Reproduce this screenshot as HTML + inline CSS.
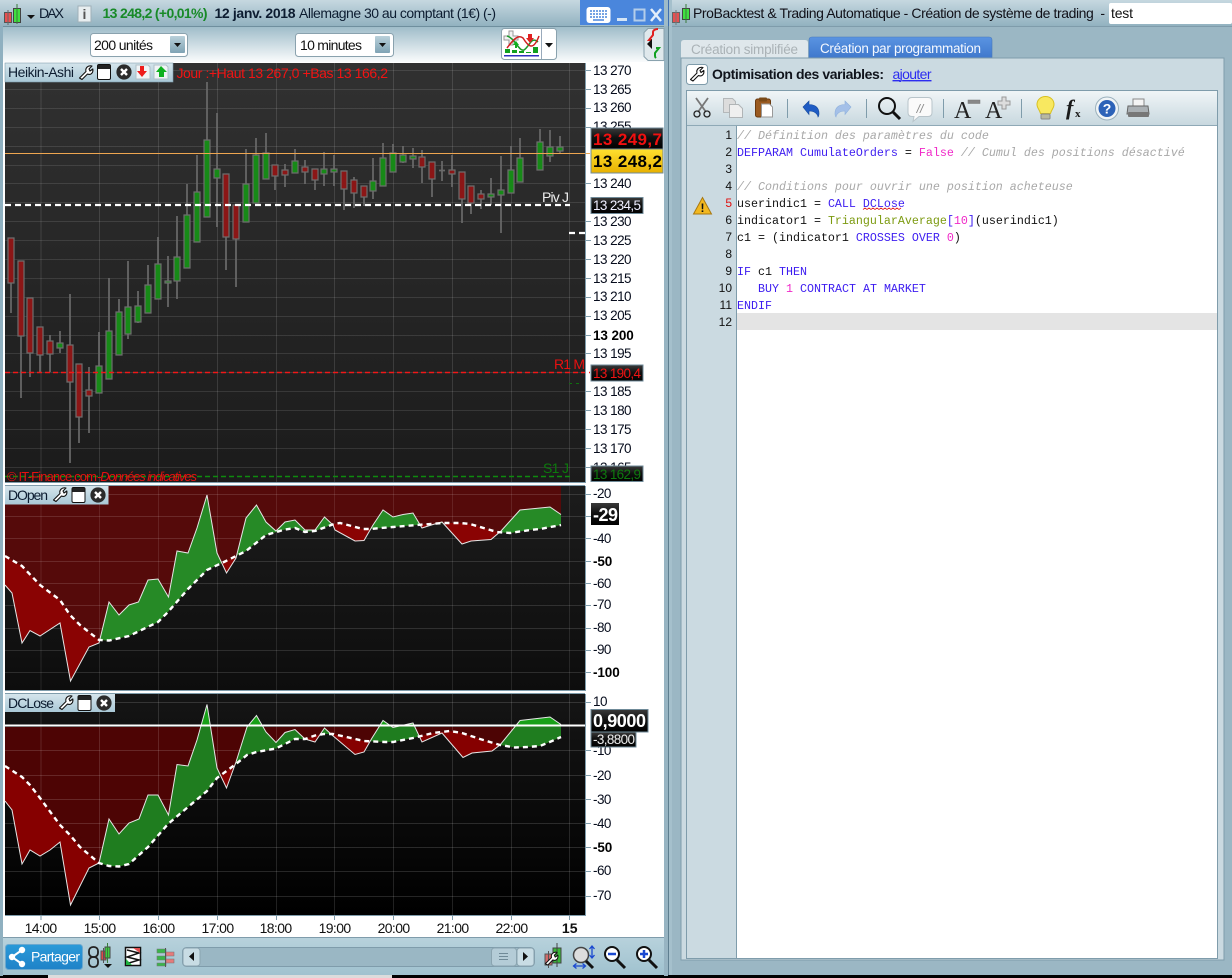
<!DOCTYPE html>
<html><head><meta charset="utf-8"><title>ProBacktest</title>
<style>
html,body{margin:0;padding:0;background:#000;width:1232px;height:978px;overflow:hidden}
svg{display:block;position:absolute;left:0;top:0}
text{font-family:"Liberation Sans",sans-serif;white-space:pre}
.ax{font-size:13.5px;letter-spacing:-.55px;fill:#060c1c}
.axb{font-size:13.5px;font-weight:bold;letter-spacing:-.1px;fill:#000}
.c{font-family:"Liberation Mono",monospace;font-size:11.67px;fill:#111}
.k{fill:#3c1cf0}.m{fill:#f028c8}.cm{fill:#a8a8a8;font-style:italic}.o{fill:#7c9a10}
.n{font-size:12px;text-anchor:end;fill:#111}
.l{font-size:14px;fill:#0c1c30}
.t{font-size:14px;fill:#101010;text-anchor:middle;letter-spacing:-.6px}
</style></head><body>
<svg width="1232" height="978" viewBox="0 0 1232 978" xmlns="http://www.w3.org/2000/svg">
<defs>
<linearGradient id="gTop" x1="0" y1="0" x2="0" y2="1"><stop offset="0" stop-color="#c6d8e0"/><stop offset="1" stop-color="#92b2c0"/></linearGradient>
<linearGradient id="gRow" x1="0" y1="0" x2="0" y2="1"><stop offset="0" stop-color="#9dbbc8"/><stop offset="1" stop-color="#fff"/></linearGradient>
<linearGradient id="gP1" x1="0" y1="0" x2="0" y2="1"><stop offset="0" stop-color="#313131"/><stop offset="1" stop-color="#1b1b1b"/></linearGradient>
<linearGradient id="gP2" x1="0" y1="0" x2="0" y2="1"><stop offset="0" stop-color="#1c1c1c"/><stop offset="1" stop-color="#0d0d0d"/></linearGradient>
<linearGradient id="gP3" x1="0" y1="0" x2="0" y2="1"><stop offset="0" stop-color="#151515"/><stop offset="1" stop-color="#000"/></linearGradient>
<linearGradient id="gChip" x1="0" y1="0" x2="0" y2="1"><stop offset="0" stop-color="#d5e5ec"/><stop offset="1" stop-color="#a9c8d6"/></linearGradient>
<linearGradient id="gBtn" x1="0" y1="0" x2="0" y2="1"><stop offset="0" stop-color="#b9d0da"/><stop offset="1" stop-color="#7fa3b4"/></linearGradient>
<linearGradient id="gDark" x1="0" y1="0" x2="0" y2="1"><stop offset="0" stop-color="#3a3a3a"/><stop offset=".45" stop-color="#111"/><stop offset="1" stop-color="#000"/></linearGradient>
<linearGradient id="gYel" x1="0" y1="0" x2="0" y2="1"><stop offset="0" stop-color="#ffe030"/><stop offset="1" stop-color="#e8b000"/></linearGradient>
<linearGradient id="gTb" x1="0" y1="0" x2="0" y2="1"><stop offset="0" stop-color="#f0f5f7"/><stop offset="1" stop-color="#c8d8df"/></linearGradient>
<linearGradient id="gBot" x1="0" y1="0" x2="0" y2="1"><stop offset="0" stop-color="#b8d2dc"/><stop offset="1" stop-color="#a0c2cf"/></linearGradient>
<linearGradient id="gBlue" x1="0" y1="0" x2="0" y2="1"><stop offset="0" stop-color="#5a94e2"/><stop offset="1" stop-color="#3f78cc"/></linearGradient>
<linearGradient id="gCand" x1="0" y1="0" x2="0" y2="1"><stop offset="0" stop-color="#2a9ad8"/><stop offset="1" stop-color="#1f82c8"/></linearGradient>
<symbol id="wr" viewBox="0 0 16 16"><path d="M1.5 13.5 L8 7 C7 3.5 10 0.5 14 1.5 L11 4.5 L12 6.5 L14.8 4.5 C15.5 8.5 12.5 11 9.5 9.5 L4 15 Z" fill="#fff" stroke="#111" stroke-width="1.1" stroke-linejoin="round"/></symbol>
<symbol id="wn" viewBox="0 0 14 16"><rect x=".5" y=".5" width="13" height="15" rx="1.5" fill="#fff" stroke="#111"/><rect x="1" y="1" width="12" height="4" fill="#222"/></symbol>
<symbol id="cl" viewBox="0 0 16 16"><circle cx="8" cy="8" r="7.6" fill="#2b2b2b"/><path d="M5 5 L11 11 M11 5 L5 11" stroke="#fff" stroke-width="2.4"/></symbol>
<clipPath id="c2a"><path d="M5 486L5 556 22 566 40 585 60 600 70 615 80 625 99 640 109 640.5 129 636 158 622 168 612 188 589 207 570 226 561 246 551 266 535 285 529.5 295 528 305 532 315 531 334 524 340 523 363 529 370 529 393 527 417 525 443 523 460 523 470 524 497 532 510 533 530 530 540 529 561 525 561 486Z"/></clipPath>
<clipPath id="c2b"><path d="M5 690L5 556 22 566 40 585 60 600 70 615 80 625 99 640 109 640.5 129 636 158 622 168 612 188 589 207 570 226 561 246 551 266 535 285 529.5 295 528 305 532 315 531 334 524 340 523 363 529 370 529 393 527 417 525 443 523 460 523 470 524 497 532 510 533 530 530 540 529 561 525 561 690Z"/></clipPath>
<clipPath id="c3a"><path d="M5 694L5 766 22 777 30 785 40 798 60 825 70 835 80 847 99 863 109 866 119 866.5 129 864 148 847 168 824 188 807 207 791 217 778 236 764 247 755 256.5 752 276 748.5 295 739 305 739 315 735.5 324 734 333 734 364 741 385 742 393 742 413 738 433 733 450 731 462 733 480 739 500 745 515 747.5 527 747 540 746 552 741 561 737 561 694Z"/></clipPath>
<clipPath id="c3b"><path d="M5 915L5 766 22 777 30 785 40 798 60 825 70 835 80 847 99 863 109 866 119 866.5 129 864 148 847 168 824 188 807 207 791 217 778 236 764 247 755 256.5 752 276 748.5 295 739 305 739 315 735.5 324 734 333 734 364 741 385 742 393 742 413 738 433 733 450 731 462 733 480 739 500 745 515 747.5 527 747 540 746 552 741 561 737 561 915Z"/></clipPath>
<clipPath id="cTop"><rect x="5" y="694" width="560" height="31"/></clipPath>
</defs>

<!-- window bases -->
<rect width="1232" height="978" fill="#000"/>
<rect x="0" y="0" width="668" height="975" fill="#9ebbc9"/>
<rect x="0" y="0" width="580" height="26" fill="url(#gTop)"/>
<rect x="3" y="26" width="661" height="38" fill="url(#gRow)"/>
<rect x="586" y="62" width="78" height="875" fill="#fff"/>
<rect x="3" y="62" width="583" height="875" fill="#fff"/>
<rect x="0" y="26" width="3" height="950" fill="#8fb0c0"/>
<rect x="664" y="26" width="4" height="950" fill="#97b4c2"/>
<rect x="3" y="26" width="661" height="1" fill="#6f8f9e"/>

<!-- top left title -->
<path d="M4.500 12.500h7v10h-7z" fill="#e85050" stroke="#555"/>
<path d="M8 10v15" stroke="#666"/>
<path d="M13.500 8.500h7v14h-7z" fill="#40e040" stroke="#444"/>
<path d="M17 4v20" stroke="#3a7a3a"/>
<path d="M27 15h8l-4 4z" fill="#111"/>
<text x="39" y="18" class="l" textLength="25">DAX</text>
<rect x="78" y="6" width="13" height="16" fill="#e8eef0" stroke="#a0b0b8"/>
<text x="84.500" y="19" text-anchor="middle" style="font-size:14px;font-weight:bold;fill:#555">i</text>
<text x="102.500" y="18" style="font-size:14px;font-weight:bold;fill:#188a28" textLength="105">13 248,2 (+0,01%)</text>
<text x="214.500" y="18" style="font-size:14px;font-weight:bold;fill:#0c1c30" textLength="81">12 janv. 2018</text>
<text x="299" y="18" class="l" textLength="197">Allemagne 30 au comptant (1€) (-)</text>
<rect x="580" y="0" width="84" height="25" fill="#4a86dc"/>
<rect x="586.500" y="7" width="24" height="16" rx="3" fill="#fff"/>
<path d="M590 11h17M590 14h17M590 17h17" stroke="#4a86dc" stroke-width="1.500" stroke-dasharray="2 1"/><path d="M593 20h11" stroke="#4a86dc" stroke-width="1.500"/>
<rect x="617" y="18" width="10" height="3" fill="#d5e5f5"/>
<rect x="634.500" y="9.500" width="10" height="11" fill="none" stroke="#b4cdea" stroke-width="2"/>
<path d="M651 9L661 21M661 9L651 21" stroke="#e4eefa" stroke-width="2.500"/>

<!-- combos -->
<rect x="90.500" y="33.500" width="97" height="23" rx="3" fill="#fff" stroke="#8aa2ae"/>
<rect x="170" y="36" width="15" height="17" rx="1" fill="url(#gBtn)"/>
<path d="M174 43h7l-3.500 4z" fill="#111"/>
<text x="94" y="50" class="l" textLength="59" style="fill:#111">200 unités</text>
<rect x="295.500" y="33.500" width="98" height="23" rx="3" fill="#fff" stroke="#8aa2ae"/>
<rect x="375" y="36" width="15" height="17" rx="1" fill="url(#gBtn)"/>
<path d="M379 43h7l-3.500 4z" fill="#111"/>
<text x="300" y="50" class="l" textLength="62" style="fill:#111">10 minutes</text>
<rect x="501.500" y="28.500" width="55" height="31" rx="3" fill="#fff" stroke="#8aa2ae"/>
<path d="M541.500 29v30" stroke="#9ab"/>
<path d="M545 43h8l-4 4.500z" fill="#111"/>
<path d="M504 36h5v-5h4v5h5v4h-5v5h-4v-5h-5z" fill="#f2f2f2" stroke="#999"/>
<path d="M507 36 C515 38 519 52 524 50 C530 46 531 36 538 42" fill="none" stroke="#1a9a2a" stroke-width="1.500"/>
<path d="M507 48 C513 40 518 34 523 38 C528 46 533 52 539 36" fill="none" stroke="#d02020" stroke-width="1.500"/>
<path d="M528 34h4v4h2l-4 5-4-5h2z" fill="#e02020"/>
<path d="M515 44h2v4h-2zM513 45l3-4 3 4z" fill="#10b020"/>
<path d="M505 53h5v-4h-5zM512 53h5v-3h-5zM519 53h5v-2h-5zM526 53h5v-1h-5zM533 53h5v-6h-5z" fill="#12a020"/>
<rect x="504" y="55" width="35" height="1.500" fill="#3030c0"/>
<path d="M648 28.500h16v32h-16l-4-4v-24z" fill="#dfe8ec" stroke="#8aa2ae"/>
<path d="M652 40h-3l4-5 0-3c0-2 3-3 5-3" fill="none" stroke="#e02020" stroke-width="2"/>
<path d="M656 48h3l-4 5v3c0 1 0 1 1 2" fill="none" stroke="#10a020" stroke-width="2"/>
<path d="M647 44l5-5v10z" fill="#111"/>

<!-- PANEL 1 -->
<rect x="5" y="63" width="580" height="419" fill="url(#gP1)"/>
<path d="M41 63V482M99.500 63V482M158.500 63V482M217.500 63V482M276.500 63V482M334.500 63V482M393.500 63V482M452.500 63V482M511.500 63V482M569.500 63V482" stroke="#fff" stroke-opacity=".12"/>
<path d="M5 70.500H585M5 89.500H585M5 108.500H585M5 127.500H585M5 146.500H585M5 165.500H585M5 183.500H585M5 202.500H585M5 221.500H585M5 240.500H585M5 259.500H585M5 278.500H585M5 297.500H585M5 316.500H585M5 335.500H585M5 353.500H585M5 372.500H585M5 391.500H585M5 410.500H585M5 429.500H585M5 448.500H585M5 467.500H585" stroke="#fff" stroke-opacity=".11"/>
<path d="M11 238V313M21 261V398M30 298V377M40 327V373M50 335V372M60 331V353M70 294V463M79 364V443M89 367V433M99 332V393M109 278V379M119 299V355M128 261V339M138 291V323M148 265V313M158 237V299M168 256V307M177 216V299M187 184V268M197 155V242M207 82V217M217 113V227M226 174V270M236 205V287M246 149V222M256 138V203M266 133V179M275 165V190M285 164V187M295 149V173M305 160V184M315 169V190M324 152V186M334 155V186M344 171V210M354 177V208M364 186V206M373 158V199M383 143V186M393 144V172M403 146V163M413 148V168M422 150V183M432 162V197M442 161V181M452 155V187M462 172V223M471 186V214M481 190V209M491 178V205M501 156V233M511 146V193M520 138V182M540 129V170M550 130V162M560 136V153M439 170.500h6" stroke="#6a6a6a" stroke-width="1.700" fill="none"/>
<path d="M8 238h6v45h-6zM18 261h6v75h-6zM27 298h6v55h-6zM37 327h6v28h-6zM47 341h6v13h-6zM67 345h6v37h-6zM76 364h6v53h-6zM86 390h6v6h-6zM223 174h6v63h-6zM233 205h6v34h-6zM272 165h6v11h-6zM282 170h6v5h-6zM302 167h6v5h-6zM312 169h6v11h-6zM341 171h6v18h-6zM351 180h6v13h-6zM361 186h6v11h-6zM419 157h6v10h-6zM429 162h6v17h-6zM449 170h6v4h-6zM459 172h6v27h-6zM468 186h6v17h-6zM478 194h6v5h-6z" fill="#8c1616" stroke="#6e6e6e" stroke-width="1.200"/>
<path d="M57 343h6v5h-6zM96 366h6v27h-6zM106 331h6v48h-6zM116 312h6v43h-6zM125 307h6v27h-6zM135 306h6v16h-6zM145 285h6v28h-6zM155 264h6v35h-6zM165 281h6v2h-6zM174 257h6v24h-6zM184 215h6v53h-6zM194 192h6v50h-6zM204 140h6v77h-6zM214 169h6v9h-6zM243 184h6v38h-6zM253 155h6v48h-6zM263 153h6v26h-6zM292 161h6v12h-6zM321 169h6v5h-6zM331 169h6v3h-6zM370 181h6v10h-6zM380 158h6v28h-6zM390 153h6v19h-6zM400 155h6v7h-6zM410 156h6v3h-6zM488 194h6v3h-6zM498 190h6v5h-6zM508 170h6v23h-6zM517 158h6v24h-6zM537 142h6v28h-6zM547 147h6v9h-6zM557 147h6v4h-6z" fill="#178a17" stroke="#6e6e6e" stroke-width="1.200"/>
<path d="M5 153.500H590" stroke="#eea650" stroke-width="1"/>
<path d="M5 205H570" stroke="#fff" stroke-width="2.200" stroke-dasharray="6 4"/>
<path d="M569 233H585" stroke="#fff" stroke-width="2.200" stroke-dasharray="6 4"/>
<path d="M5 372.500H590" stroke="#f01818" stroke-width="1.400" stroke-dasharray="5 3"/>
<path d="M5 476.500H570" stroke="#0e8a0e" stroke-width="1.400" stroke-dasharray="5 3"/>
<path d="M569 383.500H583" stroke="#0e700e" stroke-width="1" stroke-dasharray="3 4"/>
<text x="542" y="202" style="font-size:14px;fill:#eee" textLength="27">Piv J</text>
<text x="554" y="369" style="font-size:14px;fill:#e81010" textLength="31">R1 M</text>
<text x="543" y="473" style="font-size:14px;fill:#0c7a0c" textLength="26">S1 J</text>
<text x="7" y="481" style="font-size:13px;fill:#e81010" textLength="90">© IT-Finance.com</text>
<text x="97" y="481" style="font-size:13px;fill:#e81010;font-style:italic" textLength="100">-Données indicatives</text>
<path d="M585.500 63V482.500H5" fill="none" stroke="#7f9cab"/>

<!-- chip 1 -->
<rect x="5" y="63" width="168" height="19" fill="url(#gChip)" stroke="#7d9cac" stroke-width=".6"/>
<text x="8" y="77" class="l" textLength="66">Heikin-Ashi</text>
<use href="#wr" x="78" y="64" width="16" height="17"/>
<use href="#wn" x="97" y="64" width="14" height="16"/>
<use href="#cl" x="116" y="64" width="16" height="16"/>
<path d="M136 65h12l2 2v12h-14z" fill="#f0f4f6" stroke="#b0c0c8"/><path d="M140 66h4v5h3l-5 6-5-6h3z" fill="#ee1c1c"/>
<path d="M154 65h12l2 2v12h-14z" fill="#f0f4f6" stroke="#b0c0c8"/><path d="M161 66l6 6h-3v5h-5v-5h-3z" fill="#10b020"/>
<text x="176.500" y="78" style="font-size:14px;fill:#f01414" textLength="211.500">Jour :+Haut 13 267,0 +Bas 13 166,2</text>

<!-- PANEL 2 -->
<rect x="5" y="486" width="580" height="204" fill="url(#gP2)"/>
<polygon clip-path="url(#c2a)" points="5,486 561,486 561,690 5,690" fill="#550a0a"/>
<path d="M41 486V690M99.500 486V690M158.500 486V690M217.500 486V690M276.500 486V690M334.500 486V690M393.500 486V690M452.500 486V690M511.500 486V690M569.500 486V690" stroke="#fff" stroke-opacity=".1"/>
<path d="M5 494.500H585M5 516.500H585M5 538.500H585M5 561.500H585M5 583.500H585M5 605.500H585M5 628.500H585M5 650.500H585M5 672.500H585" stroke="#fff" stroke-opacity=".13"/>
<polygon clip-path="url(#c2a)" fill="#268a26" points="5,690 5,585 12,593 22,643 30,630.500 40,636 60,623 70.500,681 89,647 99,643 109,602 119,615 129,605 138.500,602 148,580 158,579 168.500,597 177,551 188,553 197,528 207,495 217,553 226.500,573 236,558 246,518 256.500,505 266,522 276,531 285,522 295,520 305,530 315,530 324.500,517 333,525 335,530 355,541 364,540.500 373,525 383,510 393,517 403,514.500 413,513 422,528 433,524.500 442,522 462,544 471,541 491,539.500 501,531 520,510 550,507 561,514.500 561,690"/>
<polygon clip-path="url(#c2b)" fill="#8a0303" points="5,486 5,585 12,593 22,643 30,630.500 40,636 60,623 70.500,681 89,647 99,643 109,602 119,615 129,605 138.500,602 148,580 158,579 168.500,597 177,551 188,553 197,528 207,495 217,553 226.500,573 236,558 246,518 256.500,505 266,522 276,531 285,522 295,520 305,530 315,530 324.500,517 333,525 335,530 355,541 364,540.500 373,525 383,510 393,517 403,514.500 413,513 422,528 433,524.500 442,522 462,544 471,541 491,539.500 501,531 520,510 550,507 561,514.500 561,486"/>
<polyline fill="none" stroke="#e6e6e6" stroke-width="1" points="5,585 12,593 22,643 30,630.500 40,636 60,623 70.500,681 89,647 99,643 109,602 119,615 129,605 138.500,602 148,580 158,579 168.500,597 177,551 188,553 197,528 207,495 217,553 226.500,573 236,558 246,518 256.500,505 266,522 276,531 285,522 295,520 305,530 315,530 324.500,517 333,525 335,530 355,541 364,540.500 373,525 383,510 393,517 403,514.500 413,513 422,528 433,524.500 442,522 462,544 471,541 491,539.500 501,531 520,510 550,507 561,514.500"/>
<polyline fill="none" stroke="#fff" stroke-width="2.400" stroke-dasharray="5 4" points="5,556 22,566 40,585 60,600 70,615 80,625 99,640 109,640.500 129,636 158,622 168,612 188,589 207,570 226,561 246,551 266,535 285,529.500 295,528 305,532 315,531 334,524 340,523 363,529 370,529 393,527 417,525 443,523 460,523 470,524 497,532 510,533 530,530 540,529 561,525"/>
<path d="M585.500 486V690.500H5M5 485.500H585" fill="none" stroke="#7f9cab"/>
<rect x="5" y="486" width="103.500" height="18.500" fill="url(#gChip)"/>
<text x="8" y="500" class="l" textLength="40">DOpen</text>
<use href="#wr" x="52" y="486" width="16" height="17"/>
<use href="#wn" x="71" y="487" width="15" height="16"/>
<use href="#cl" x="90" y="487" width="16" height="16"/>

<!-- PANEL 3 -->
<rect x="5" y="694" width="580" height="221" fill="url(#gP3)"/>
<rect clip-path="url(#c3a)" x="5" y="727" width="556" height="188" fill="#4d0404"/>
<path d="M41 694V915M99.500 694V915M158.500 694V915M217.500 694V915M276.500 694V915M334.500 694V915M393.500 694V915M452.500 694V915M511.500 694V915M569.500 694V915" stroke="#fff" stroke-opacity=".13"/>
<path d="M5 702.500H585M5 750.500H585M5 775.500H585M5 799.500H585M5 823.500H585M5 847.500H585M5 871.500H585M5 896.500H585" stroke="#fff" stroke-opacity=".14"/>
<polygon clip-path="url(#c3a)" fill="#1f7d1f" points="5,915 5,801 12,810 22,864 30,850 40,856 50,850 60,842 70.500,905 89,868 99,863 109,819 119,834 129,823 139,819 148,795 158,795 168.500,815 177,764.500 188,766 197,740 207,704.500 217,768 226.500,788 236,762 247,727 256.500,715.500 266,732 276,742.500 285,732.500 295,729.500 305,739 315,742 324.500,728 332,735 355,754.500 364,752 372,738 383,720.500 393,727.500 413,723 422,742 442,733 463,757.500 472,753 492,751 500,745 520,720.500 550,717 561,724.500 561,915"/>
<polygon clip-path="url(#cTop)" fill="#18a018" points="5,915 5,801 12,810 22,864 30,850 40,856 50,850 60,842 70.500,905 89,868 99,863 109,819 119,834 129,823 139,819 148,795 158,795 168.500,815 177,764.500 188,766 197,740 207,704.500 217,768 226.500,788 236,762 247,727 256.500,715.500 266,732 276,742.500 285,732.500 295,729.500 305,739 315,742 324.500,728 332,735 355,754.500 364,752 372,738 383,720.500 393,727.500 413,723 422,742 442,733 463,757.500 472,753 492,751 500,745 520,720.500 550,717 561,724.500 561,915"/>
<polygon clip-path="url(#c3b)" fill="#860000" points="5,694 5,801 12,810 22,864 30,850 40,856 50,850 60,842 70.500,905 89,868 99,863 109,819 119,834 129,823 139,819 148,795 158,795 168.500,815 177,764.500 188,766 197,740 207,704.500 217,768 226.500,788 236,762 247,727 256.500,715.500 266,732 276,742.500 285,732.500 295,729.500 305,739 315,742 324.500,728 332,735 355,754.500 364,752 372,738 383,720.500 393,727.500 413,723 422,742 442,733 463,757.500 472,753 492,751 500,745 520,720.500 550,717 561,724.500 561,694"/>
<polyline fill="none" stroke="#e6e6e6" stroke-width="1" points="5,801 12,810 22,864 30,850 40,856 50,850 60,842 70.500,905 89,868 99,863 109,819 119,834 129,823 139,819 148,795 158,795 168.500,815 177,764.500 188,766 197,740 207,704.500 217,768 226.500,788 236,762 247,727 256.500,715.500 266,732 276,742.500 285,732.500 295,729.500 305,739 315,742 324.500,728 332,735 355,754.500 364,752 372,738 383,720.500 393,727.500 413,723 422,742 442,733 463,757.500 472,753 492,751 500,745 520,720.500 550,717 561,724.500"/>
<polyline fill="none" stroke="#fff" stroke-width="2.400" stroke-dasharray="5 4" points="5,766 22,777 30,785 40,798 60,825 70,835 80,847 99,863 109,866 119,866.500 129,864 148,847 168,824 188,807 207,791 217,778 236,764 247,755 256.500,752 276,748.500 295,739 305,739 315,735.500 324,734 333,734 364,741 385,742 393,742 413,738 433,733 450,731 462,733 480,739 500,745 515,747.500 527,747 540,746 552,741 561,737"/>
<path d="M5 725.500H591" stroke="#fff" stroke-width="2"/>
<path d="M585.500 694V915.500H5M5 693.500H585" fill="none" stroke="#7f9cab"/>
<rect x="5" y="694" width="110" height="18" fill="url(#gChip)"/>
<text x="8" y="708" class="l" textLength="46">DCLose</text>
<use href="#wr" x="58" y="694" width="16" height="17"/>
<use href="#wn" x="77" y="695" width="15" height="16"/>
<use href="#cl" x="96" y="695" width="16" height="16"/>

<!-- axis ticks -->
<path d="M586 70.500h5M586 89.500h5M586 108.500h5M586 127.500h5M586 183.500h5M586 221.500h5M586 240.500h5M586 259.500h5M586 278.500h5M586 297.500h5M586 316.500h5M586 335.500h5M586 353.500h5M586 391.500h5M586 410.500h5M586 429.500h5M586 448.500h5M586 467.500h5M586 494.500h5M586 516.500h5M586 538.500h5M586 561.500h5M586 583.500h5M586 605.500h5M586 628.500h5M586 650.500h5M586 672.500h5M586 702.500h5M586 750.500h5M586 775.500h5M586 799.500h5M586 823.500h5M586 847.500h5M586 871.500h5M586 896.500h5" stroke="#7f9cab"/>
<g class="ax">
<text class="ax" x="593" y="75">13 270</text><text class="ax" x="593" y="94">13 265</text><text class="ax" x="593" y="112">13 260</text><text class="ax" x="593" y="131">13 255</text>
<text class="ax" x="593" y="188">13 240</text><text class="ax" x="593" y="226">13 230</text><text class="ax" x="593" y="245">13 225</text><text class="ax" x="593" y="264">13 220</text><text class="ax" x="593" y="283">13 215</text><text class="ax" x="593" y="301">13 210</text><text class="ax" x="593" y="320">13 205</text>
<text class="axb" x="593" y="340">13 200</text>
<text class="ax" x="593" y="358">13 195</text><text class="ax" x="593" y="396">13 185</text><text class="ax" x="593" y="415">13 180</text><text class="ax" x="593" y="434">13 175</text><text class="ax" x="593" y="453">13 170</text><text class="ax" x="593" y="472">13 165</text>
<text class="ax" x="593" y="498">-20</text><text class="ax" x="593" y="543">-40</text><text class="axb" x="593" y="566">-50</text><text class="ax" x="593" y="588">-60</text><text class="ax" x="593" y="609">-70</text><text class="ax" x="593" y="632">-80</text><text class="ax" x="593" y="654">-90</text><text class="axb" x="593" y="677">-100</text>
<text class="ax" x="593" y="706">10</text><text class="ax" x="593" y="755">-10</text><text class="ax" x="593" y="780">-20</text><text class="ax" x="593" y="804">-30</text><text class="ax" x="593" y="828">-40</text><text class="axb" x="593" y="852">-50</text><text class="ax" x="593" y="875">-60</text><text class="ax" x="593" y="900">-70</text>
</g>

<!-- badges -->
<rect x="591" y="128" width="72" height="21" fill="url(#gDark)" stroke="#6f8a98"/>
<text x="593" y="145" style="font-size:17px;font-weight:bold;fill:#f01010" textLength="69">13 249,7</text>
<rect x="591" y="149" width="72" height="24" fill="url(#gYel)" stroke="#6f8a98"/>
<text x="593" y="167" style="font-size:17px;font-weight:bold;fill:#000" textLength="69">13 248,2</text>
<rect x="591" y="197.500" width="52" height="16" fill="url(#gDark)" stroke="#6f8a98"/>
<text x="593" y="210" style="font-size:13.500px;fill:#eef" textLength="48">13 234,5</text>
<rect x="591" y="365" width="52" height="16" fill="url(#gDark)" stroke="#6f8a98"/>
<text x="593" y="378" style="font-size:13.500px;fill:#f01414" textLength="48">13 190,4</text>
<rect x="591" y="466" width="52" height="15.500" fill="url(#gDark)" stroke="#6f8a98"/>
<text x="593" y="479" style="font-size:13.500px;fill:#0e7a0e" textLength="48">13 162,9</text>
<rect x="591" y="503" width="28" height="22" fill="url(#gDark)"/>
<text x="593" y="521" style="font-size:18px;font-weight:bold;fill:#fff" textLength="25">-29</text>
<rect x="591" y="709.500" width="57" height="22.500" fill="url(#gDark)" stroke="#6f8a98"/>
<text x="593" y="727" style="font-size:18px;font-weight:bold;fill:#fff" textLength="53">0,9000</text>
<rect x="591" y="732" width="45" height="15" fill="url(#gDark)" stroke="#6f8a98"/>
<text x="593" y="744" style="font-size:13.500px;fill:#eee" textLength="42">-3,8800</text>

<!-- time axis -->
<path d="M41 915v5M99.500 915v5M158.500 915v5M217.500 915v5M276.500 915v5M334.500 915v5M393.500 915v5M452.500 915v5M511.500 915v5M569.500 915v5" stroke="#7f9cab"/>
<text class="t" x="40.600" y="933">14:00</text><text class="t" x="99.600" y="933">15:00</text><text class="t" x="158.500" y="933">16:00</text><text class="t" x="217.500" y="933">17:00</text><text class="t" x="275.600" y="933">18:00</text><text class="t" x="334.600" y="933">19:00</text><text class="t" x="393.600" y="933">20:00</text><text class="t" x="452.600" y="933">21:00</text><text class="t" x="511.500" y="933">22:00</text>
<text x="569.700" y="933" text-anchor="middle" style="font-size:14px;font-weight:bold;fill:#111">15</text>

<!-- bottom toolbar -->
<rect x="3" y="937" width="661" height="38" fill="url(#gBot)"/>
<rect x="3" y="937" width="661" height="1" fill="#7f9cab"/>
<rect x="5.500" y="944.500" width="77" height="25" rx="3" fill="url(#gCand)" stroke="#6aa8cf"/>
<path d="M22 950L12 957L22 964" fill="none" stroke="#fff" stroke-width="2"/>
<circle cx="22" cy="950" r="3.200" fill="#fff"/><circle cx="12" cy="957" r="3.200" fill="#fff"/><circle cx="22" cy="964" r="3.200" fill="#fff"/>
<text x="31" y="961.500" style="font-size:14px;fill:#fff" textLength="49">Partager</text>
<rect x="89" y="947" width="9" height="10" rx="4" fill="none" stroke="#222" stroke-width="1.800"/><rect x="89" y="957" width="9" height="10" rx="4" fill="none" stroke="#222" stroke-width="1.800"/>
<path d="M101 951h5v9h-5z" fill="#e04848" stroke="#555"/><path d="M103.500 948v15" stroke="#555"/>
<path d="M105 950h5v11h-5z" fill="#40d040" stroke="#444" transform="translate(0,-3)"/><path d="M107.500 943v20" stroke="#3a7a3a"/>
<path d="M104 964h8l-4 4z" fill="#111"/>
<rect x="125.500" y="947.500" width="15" height="18" fill="#fff" stroke="#111" stroke-width="1.500"/>
<path d="M127 950l12 3-12 4 12 3-10 3" fill="none" stroke="#111" stroke-width="1.500"/>
<path d="M133 948h7v5z" fill="#e05050"/><path d="M126 965v-6l6 6z" fill="#20b040"/>
<path d="M157 949h9v4h-9zM157 956h9v4h-9zM157 963h9v3h-9z" fill="#3ab54a" stroke="#777" stroke-width=".6"/>
<path d="M166 952h8v4h-8zM166 959h8v4h-8z" fill="#e57a7a" stroke="#777" stroke-width=".6"/>
<path d="M165.500 948v19" stroke="#555"/>
<rect x="182.500" y="947.500" width="352" height="19" rx="4" fill="#9ab7c4" stroke="#7f9cab"/>
<rect x="183" y="948" width="17" height="18" rx="3" fill="#c8dce4" stroke="#8aa4b0"/>
<path d="M194 952v9l-5-4.500z" fill="#111"/>
<rect x="491.500" y="948" width="25" height="18" rx="3" fill="#b4ccd7" stroke="#8aa4b0"/>
<path d="M499 953.500h9M499 956.500h9M499 959.500h9" stroke="#6f8a98"/>
<rect x="517" y="948" width="17" height="18" rx="3" fill="#c8dce4" stroke="#8aa4b0"/>
<path d="M523 952v9l5-4.500z" fill="#111"/>
<rect x="545" y="954" width="7" height="11" fill="#d06a6a" stroke="#555"/><path d="M548.500 951v17" stroke="#555"/>
<rect x="553" y="948" width="8" height="15" fill="#38b838" stroke="#444"/><path d="M557 943v24" stroke="#444"/>
<use href="#wr" x="544" y="950" width="15" height="17"/>
<circle cx="581" cy="955" r="7.500" fill="#ddd" stroke="#444" stroke-width="1.500"/><path d="M586 961l7 7" stroke="#111" stroke-width="3"/>
<path d="M592 946v12M589.500 949l2.500-3 2.500 3M589.500 955l2.500 3 2.500-3M574 966h11M576.500 963.500l-3 2.500 3 2.500M582.500 963.500l3 2.500-3 2.500" fill="none" stroke="#1a48d0" stroke-width="1.300"/>
<circle cx="612" cy="954" r="7" fill="#fff" stroke="#111" stroke-width="2"/><path d="M617 960l8 8" stroke="#111" stroke-width="3"/><path d="M608 954h8" stroke="#1a48d0" stroke-width="2.500"/>
<circle cx="644" cy="954" r="7" fill="#fff" stroke="#111" stroke-width="2"/><path d="M649 960l8 8" stroke="#111" stroke-width="3"/><path d="M640 954h8M644 950v8" stroke="#1a48d0" stroke-width="2.500"/>
<rect x="48" y="975" width="344" height="3" fill="#dcdcdc"/>

<!-- RIGHT WINDOW -->
<rect x="669" y="0" width="563" height="975" fill="#9bb7c4"/>
<rect x="672" y="0" width="560" height="26" fill="url(#gTop)"/>
<rect x="672" y="26" width="560" height="1" fill="#7f9cab"/>
<rect x="669" y="0" width="3" height="975" fill="#a5c0cc"/>
<rect x="668" y="0" width="1" height="26" fill="#3f6fb0"/>
<rect x="668" y="26" width="1" height="949" fill="#5f7f90"/>
<path d="M672.500 12.500h7v10h-7z" fill="#e85050" stroke="#666"/><path d="M676 10v15" stroke="#777"/>
<path d="M682.500 8.500h7v11h-7z" fill="#40e040" stroke="#444"/><path d="M686 4v19" stroke="#3a7a3a"/>
<text x="693" y="18" class="l" textLength="412" style="fill:#101018">ProBacktest &amp; Trading Automatique - Création de système de trading  -</text>
<rect x="1109" y="3" width="123" height="21" rx="2" fill="#fff"/>
<text x="1111" y="18" style="font-size:14px;fill:#111" textLength="22">test</text>

<!-- tabs -->
<path d="M681 58V43q0-3 3-3H805q3 0 3 3V58z" fill="#dfe7eb"/>
<text x="691" y="54" style="font-size:13.500px;fill:#aab2b6" textLength="107">Création simplifiée</text>
<path d="M809 58V40q0-3 3-3H989q3 0 3 3V58z" fill="url(#gBlue)" stroke="#4a78b8" stroke-width=".6"/>
<text x="820" y="53" style="font-size:13.500px;fill:#f4f8ff" textLength="161">Création par programmation</text>
<rect x="681" y="58" width="543" height="902" fill="#cbdae1" stroke="#7f9cab"/>
<rect x="686.500" y="64.500" width="21" height="20" rx="3" fill="#fff" stroke="#7f9cab"/>
<use href="#wr" x="689" y="66" width="16" height="16"/>
<text x="712" y="79" style="font-size:14px;font-weight:bold;fill:#10141c" textLength="172">Optimisation des variables:</text>
<text x="892.500" y="79" style="font-size:14px;fill:#2c2cf0;text-decoration:underline" textLength="39">ajouter</text>

<!-- editor -->
<rect x="686.500" y="90.500" width="531" height="868" fill="#cbdae1" stroke="#7f9cab"/>
<rect x="687" y="91" width="530" height="34" fill="url(#gTb)"/>
<rect x="737" y="126" width="480" height="832" fill="#fff"/>
<path d="M736.500 126V958" stroke="#7f9cab"/>
<path d="M687 125.500H1217" stroke="#8fa9b6"/>
<rect x="737" y="313" width="480" height="17" fill="#e4e4e4"/>

<!-- editor toolbar icons -->
<path d="M696 98L706 112M708 98L698 112" stroke="#777" stroke-width="1.800"/>
<circle cx="697" cy="114" r="3" fill="none" stroke="#222" stroke-width="1.300"/><circle cx="707" cy="114" r="3" fill="none" stroke="#222" stroke-width="1.300"/>
<path d="M723.500 98.500h9l3 3v11h-12z" fill="#dcdcdc" stroke="#b4b8ba"/>
<path d="M729.500 104.500h9l4 4v9h-13z" fill="#efefef" stroke="#b0b4b6"/>
<rect x="755.500" y="99" width="15" height="18" rx="2" fill="#9a5a20" stroke="#6a3a10"/>
<rect x="759" y="97.500" width="8" height="4" rx="1" fill="#7a4a18"/>
<path d="M761.500 104h8l3 3v10h-11z" fill="#fff" stroke="#999"/>
<path d="M787.500 99V118M866.500 99V118M943.500 99V118M1021.500 99V118" stroke="#7f9cab"/>
<path d="M803 107l6-6v3.500c6 0 10 3 10 9 0 1.500-.5 3-1 3.500-.5-3.500-4-6-9-6v3.500z" fill="#1f5cc4" stroke="#174a9c" stroke-width=".6"/>
<path d="M851 107l-6-6v3.500c-6 0-10 3-10 9 0 1.500.5 3 1 3.500.5-3.500 4-6 9-6v3.500z" fill="#a4c0e8" stroke="#8fb0dc" stroke-width=".6"/>
<circle cx="887" cy="106" r="8" fill="none" stroke="#111" stroke-width="2"/><path d="M893 112l7 7" stroke="#111" stroke-width="3"/>
<path d="M912 97.500h16q4 0 4 4v11q0 4-4 4h-9l-6 5 1-5h-2q-4 0-4-4v-11q0-4 4-4z" fill="#fafafa" stroke="#b8c4ca"/>
<text x="920" y="113" text-anchor="middle" style="font-size:12px;font-style:italic;fill:#888">//</text>
<text x="954" y="118" style="font-family:'Liberation Serif',serif;font-size:24px;fill:#222">A</text>
<rect x="968" y="100" width="12" height="3.500" fill="#888" stroke="#777" stroke-width=".5"/>
<text x="985" y="118" style="font-family:'Liberation Serif',serif;font-size:24px;fill:#222">A</text>
<path d="M1002 97h4v4h4v4h-4v4h-4v-4h-4v-4h4z" fill="#ddd" stroke="#999"/>
<path d="M1045.500 96.500c5 0 8.500 3.500 8.500 8 0 3.500-2.500 5-3.500 9h-10c-1-4-3.500-5.500-3.500-9 0-4.500 3.500-8 8.500-8z" fill="#f8e860" stroke="#d8c020"/>
<rect x="1041" y="114" width="9" height="5" rx="1" fill="#b8b8a0" stroke="#888"/>
<text x="1066" y="115" style="font-family:'Liberation Serif',serif;font-size:22px;font-style:italic;font-weight:bold;fill:#1a1a1a">f</text>
<text x="1075" y="117" style="font-family:'Liberation Serif',serif;font-size:11px;font-weight:bold;fill:#1a1a1a">x</text>
<circle cx="1107" cy="108.500" r="11.500" fill="#f0f4f6" stroke="#9ab0bc"/>
<circle cx="1107" cy="108.500" r="8.500" fill="#2c62b8"/>
<text x="1107" y="113.500" text-anchor="middle" style="font-size:14px;font-weight:bold;fill:#fff">?</text>
<rect x="1133" y="99" width="11" height="7" fill="#f4f4f4" stroke="#888"/>
<path d="M1128 106h20l1 8h-22z" fill="#aab0b4" stroke="#666"/>
<rect x="1128" y="112" width="21" height="5" rx="1" fill="#777"/>

<!-- gutter -->
<path d="M702.500 197.500l9 16.500h-18z" fill="#f2b820" stroke="#a87810"/>
<text x="702.500" y="212" text-anchor="middle" style="font-size:12px;font-weight:bold;fill:#111">!</text>
<text class="n" x="732" y="139">1</text><text class="n" x="732" y="156">2</text><text class="n" x="732" y="173">3</text><text class="n" x="732" y="190">4</text>
<text class="n" x="732" y="207" style="fill:#e01010">5</text>
<text class="n" x="732" y="224">6</text><text class="n" x="732" y="241">7</text><text class="n" x="732" y="258">8</text><text class="n" x="732" y="275">9</text><text class="n" x="732" y="292">10</text><text class="n" x="732" y="309">11</text><text class="n" x="732" y="326">12</text>

<!-- code -->
<text class="c cm" x="737" y="139">// Définition des paramètres du code</text>
<text class="c" x="737" y="156"><tspan class="k">DEFPARAM CumulateOrders</tspan> = <tspan class="m">False</tspan> <tspan class="cm">// Cumul des positions désactivé</tspan></text>
<text class="c cm" x="737" y="190">// Conditions pour ouvrir une position acheteuse</text>
<text class="c" x="737" y="207">userindic1 = <tspan class="k">CALL DCLose</tspan></text>
<path d="M863 209.500l2-1.500 2 1.500 2-1.500 2 1.500 2-1.500 2 1.500 2-1.500 2 1.500 2-1.500 2 1.500 2-1.500 2 1.500 2-1.500 2 1.500 2-1.500 2 1.500 2-1.500 2 1.500 2-1.500" fill="none" stroke="#e02020" stroke-width=".8"/>
<text class="c" x="737" y="224">indicator1 = <tspan class="o">TriangularAverage</tspan><tspan class="k">[</tspan><tspan class="m">10</tspan><tspan class="k">]</tspan>(userindic1)</text>
<text class="c" x="737" y="241">c1 = (indicator1 <tspan class="k">CROSSES OVER</tspan> <tspan class="m">0</tspan>)</text>
<text class="c" x="737" y="275"><tspan class="k">IF</tspan> c1 <tspan class="k">THEN</tspan></text>
<text class="c" x="737" y="292">   <tspan class="k">BUY</tspan> <tspan class="m">1</tspan> <tspan class="k">CONTRACT AT MARKET</tspan></text>
<text class="c k" x="737" y="309">ENDIF</text>
</svg>
</body></html>
